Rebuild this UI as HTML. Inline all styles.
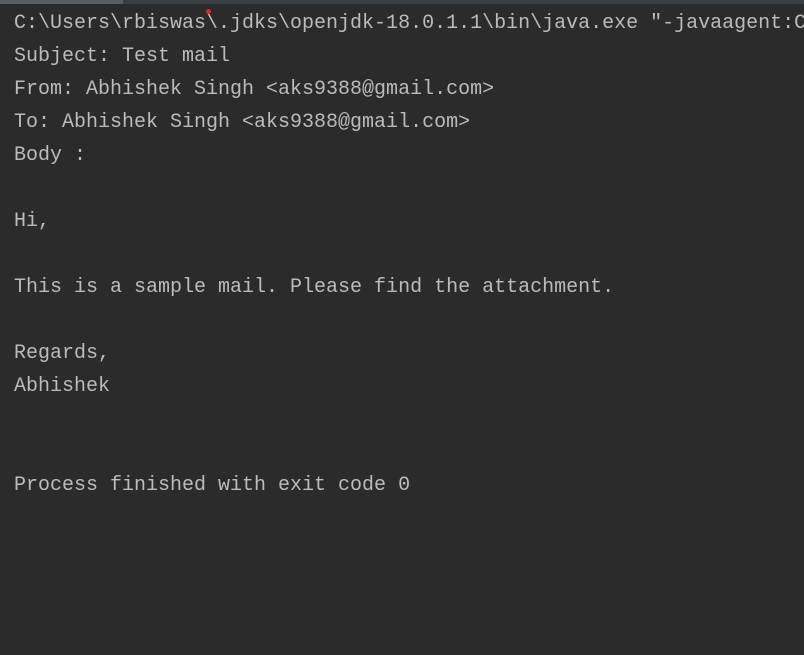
<!DOCTYPE html>
<html><head><style>
body{margin:0;width:804px;height:655px;background:#2b2b2b;overflow:hidden;position:relative}
.bar{position:absolute;top:0;left:0;width:804px;height:4px;background:#3c3f41}
.bar i{position:absolute;left:0;top:0;width:123px;height:4px;background:#5a5d60}
pre{position:absolute;left:14px;top:7px;margin:0;font-family:"Liberation Mono",monospace;font-size:20px;line-height:33px;color:#bbbbbb;white-space:pre}
.dot{position:absolute;left:206px;top:9px;width:5px;height:5px;border-radius:50%;background:#e0282a}
</style></head><body>
<div class="bar"><i></i></div>
<pre>C:\Users\rbiswas\.jdks\openjdk-18.0.1.1\bin\java.exe "-javaagent:C
Subject: Test mail
From: Abhishek Singh &lt;aks9388@gmail.com&gt;
To: Abhishek Singh &lt;aks9388@gmail.com&gt;
Body :

Hi,

This is a sample mail. Please find the attachment.

Regards,
Abhishek


Process finished with exit code 0</pre>
<div class="dot"></div>
</body></html>
